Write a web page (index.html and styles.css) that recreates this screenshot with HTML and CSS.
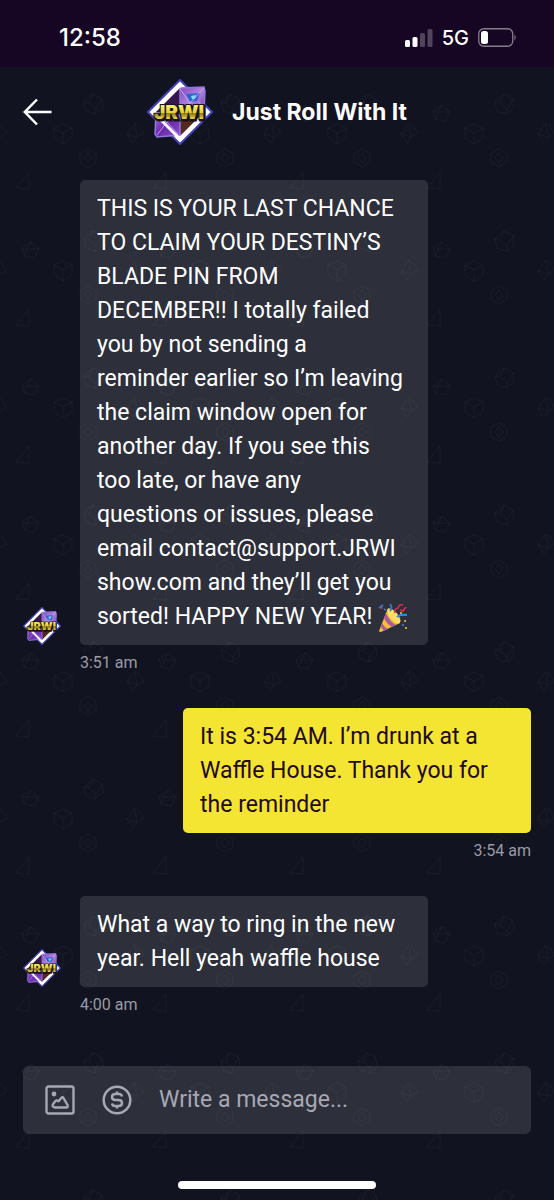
FILE: index.html
```
<!DOCTYPE html>
<html lang="en">
<head>
    <meta charset="UTF-8">
    <meta name="viewport" content="width=device-width, initial-scale=1.0">
    <title>Just Roll With It</title>
    <link rel="stylesheet" href="styles.css">
</head>
<body>
    <div class="status-bar">
        <span class="clock">12:58</span>
        <div class="status-icons">
            <svg width="28" height="18" viewBox="0 0 28 18" fill="#fff" aria-hidden="true">
                <rect x="0" y="11" width="5" height="7" rx="1.5"/>
                <rect x="7.5" y="8" width="5" height="10" rx="1.5"/>
                <rect x="15" y="4" width="5" height="14" rx="1.5" opacity="0.25"/>
                <rect x="22.5" y="0" width="5" height="18" rx="1.5" opacity="0.25"/>
            </svg>
            <span class="network">5G</span>
            <svg width="39" height="19" viewBox="0 0 39 19" aria-hidden="true">
                <rect x="0.75" y="0.75" width="34" height="17.5" rx="5" fill="none" stroke="#857d8c" stroke-width="1.3"/>
                <rect x="3" y="3" width="7" height="13" rx="2.5" fill="#fff"/>
                <path d="M36.5 6.5q2.500 3 0 6z" fill="#857d8c"/>
            </svg>
        </div>
    </div>

    <div class="chat">
        <header class="chat-header">
            <button class="back" type="button" aria-label="Back">
                <svg width="30" height="28" viewBox="0 0 30 28" fill="none" stroke="#fff" stroke-width="2.5" aria-hidden="true">
                    <path d="M14 1.500 1.800 14 14 26.500M2 14H28.500"/>
                </svg>
            </button>
            <div class="channel">
                <svg class="channel-logo" viewBox="0 0 66 66" aria-hidden="true">
                    <defs>
                        <linearGradient id="gold" x1="0" y1="0" x2="0" y2="1">
                            <stop offset="0.2" stop-color="#f8ee6a"/>
                            <stop offset="0.5" stop-color="#e4cf2e"/>
                            <stop offset="0.55" stop-color="#8f7a20"/>
                            <stop offset="0.8" stop-color="#f2df3c"/>
                        </linearGradient>
                        <linearGradient id="gem" x1="0" y1="0" x2="1" y2="1">
                            <stop offset="0" stop-color="#8344bd"/>
                            <stop offset="0.5" stop-color="#b484e0"/>
                            <stop offset="1" stop-color="#6a3aa8"/>
                        </linearGradient>
                        <linearGradient id="gem-dark" x1="0" y1="0" x2="1" y2="1">
                            <stop offset="0" stop-color="#a86be0"/>
                            <stop offset="0.5" stop-color="#6a2ba6"/>
                            <stop offset="1" stop-color="#8b4fd0"/>
                        </linearGradient>
                    </defs>
                    <g id="logo">
                        <path d="M33 1 65 33 33 65 1 33Z" fill="#fff" stroke="#4442b8" stroke-width="2"/>
                        <path d="M33 8 V33 H8Z" fill="#35184f"/>
                        <path d="M33 58 V33 H58Z" fill="#56291f"/>
                        <path d="M33 9 57 8 58 12 57 33 H33Z" fill="url(#gem)" stroke="#8d78e0" stroke-width="1.5"/>
                        <path d="M39 15 53 14 50 22 43 23Z" fill="#2968cf"/>
                        <path d="M44 17 49 16 48 20 45 20Z" fill="#7fdcff"/>
                        <path d="M33 10 43 24 57 9M43 24 38 33M51 22 57 30" fill="none" stroke="#c9a6f4"/>
                        <path d="M9 34 H33 V56 L10 58 8 55Z" fill="url(#gem-dark)" stroke="#8d78e0" stroke-width="1.5"/>
                        <path d="M10 56 20 43 31 55M10 38 20 43 32 38" fill="none" stroke="#d58bff"/>
                        <path d="M33 60 60 33" stroke="#fff" stroke-width="4"/>
                        <path d="M6 33 33 6" stroke="#fff" stroke-width="4"/>
                        <path d="M7 34 33 60" stroke="#fff" stroke-width="3"/>
                        <text x="33" y="41" text-anchor="middle" class="logo-shadow">JRWI</text>
                        <text x="32" y="40" text-anchor="middle" class="logo-text">JRWI</text>
                    </g>
                </svg>
                <h1>Just Roll With It</h1>
            </div>
        </header>

        <main class="messages">
            <div class="message received">
                <svg class="avatar" viewBox="0 0 66 66" aria-hidden="true"><use href="#logo"/></svg>
                <p class="bubble">
                    THIS IS YOUR LAST CHANCE<br>
                    TO CLAIM YOUR DESTINY’S<br>
                    BLADE PIN FROM<br>
                    DECEMBER!! I totally failed<br>
                    you by not sending a<br>
                    reminder earlier so I’m leaving<br>
                    the claim window open for<br>
                    another day. If you see this<br>
                    too late, or have any<br>
                    questions or issues, please<br>
                    email contact@support.JRWI<br>
                    show.com and they’ll get you<br>
                    sorted! HAPPY NEW YEAR!
                    <svg class="emoji" viewBox="0 0 30 30" role="img" aria-label="Party popper">
                        <path d="M10 5 1 28q0 1 2 1L22 20Q19 9 10 5Z" fill="#f6bd35"/>
                        <path d="M8 10q4 9 10 12l-4 2Q8 20 6 15zM4 20q3 5 6 6l-4 2-3-4z" fill="#a65c9e"/>
                        <ellipse cx="16" cy="13" rx="4" ry="9" transform="rotate(-40 16 13)" fill="#ffdf63"/>
                        <path d="M17 10q-1-4 3-5 1-4 5-3M22 7l3 1 3-4" fill="none" stroke="#cd344f" stroke-width="1.6"/>
                        <path d="M19 14q3-3 10-2" fill="none" stroke="#398de0" stroke-width="2.2"/>
                        <path d="M12 8q3-3 0-7M1 5l4-3M6 6l2 1" fill="none" stroke="#3977cf" stroke-width="1.8"/>
                        <g fill="#f5cf45">
                            <circle cx="27" cy="18" r="1"/>
                            <circle cx="28" cy="25" r="1"/>
                            <circle cx="23" cy="10" r="1"/>
                        </g>
                        <circle cx="25" cy="22" r="1" fill="#398de0"/>
                        <circle cx="4" cy="5" r="1" fill="#cd344f"/>
                    </svg>
                </p>
                <time class="time">3:51 am</time>
            </div>

            <div class="message sent">
                <p class="bubble">It is 3:54 AM. I’m drunk at a Waffle House. Thank you for the reminder</p>
                <time class="time">3:54 am</time>
            </div>

            <div class="message received">
                <svg class="avatar" viewBox="0 0 66 66" aria-hidden="true"><use href="#logo"/></svg>
                <p class="bubble">What a way to ring in the new year. Hell yeah waffle house</p>
                <time class="time">4:00 am</time>
            </div>
        </main>

        <form class="composer">
            <button type="button" aria-label="Add image">
                <svg width="30" height="30" viewBox="0 0 30 30" fill="none" stroke="currentColor" stroke-width="2.4" stroke-linejoin="round" aria-hidden="true">
                    <rect x="1.5" y="1.5" width="27" height="27" rx="2"/>
                    <circle cx="9" cy="9" r="2.4" fill="currentColor" stroke="none"/>
                    <path d="M10 22.500q-4-1-1.500-4l2-2.500q1-1 3 .2l3-3.500q1-1 2 .3l4 7q1 2.500-1.500 2.500z"/>
                </svg>
            </button>
            <button type="button" aria-label="Send a tip">
                <svg width="30" height="30" viewBox="0 0 30 30" fill="none" stroke="currentColor" stroke-width="2.5" aria-hidden="true">
                    <circle cx="15" cy="15" r="13.3"/>
                    <path d="M20 11.500q-.5-2.500-3-2.500h-3.500Q10 9 10 12t3.500 3h3q3.500 0 3.500 3t-3.500 3H13q-2.500 0-3-2.500M15 6.500V9M15 21v2.500"/>
                </svg>
            </button>
            <input type="text" name="message" placeholder="Write a message..." aria-label="Write a message">
        </form>
        <div class="home-indicator"></div>
    </div>
</body>
</html>
```

FILE: styles.css
```
* {
    box-sizing: border-box;
}
body {
    margin: 0;
    min-height: 100vh;
    display: flex;
    flex-direction: column;
    font-family: Roboto, "Liberation Sans", sans-serif;
    font-size: 23px;
    line-height: 34px;
    color: #fff;
    background-color: #111320;
}
button {
    padding: 0;
    border: none;
    background: none;
    color: inherit;
    cursor: pointer;
}
svg {
    display: block;
}
.logo-text, .logo-shadow {
    font-family: Inter, sans-serif;
    font-size: 19px;
    font-weight: 900;
}
.logo-text {
    fill: url(#gold);
    stroke: #17121c;
    stroke-width: 2px;
    paint-order: stroke;
}
.logo-shadow {
    fill: #17121c;
    stroke: #17121c;
    stroke-width: 3px;
}

/* Status bar */
.status-bar {
    display: flex;
    justify-content: space-between;
    align-items: center;
    height: 67px;
    padding: 8px 37px 0 59px;
    background-color: #160624;
    font-family: Inter, sans-serif;
}
.clock {
    font-size: 24px;
    font-weight: 500;
}
.status-icons {
    display: flex;
    align-items: center;
    gap: 9px;
}
.network {
    font-size: 20px;
    font-weight: 500;
}

/* Chat */
.chat {
    flex: 1;
    display: flex;
    flex-direction: column;
    padding: 0 23px;
    background-image: url("data:image/svg+xml,%3Csvg xmlns='http://www.w3.org/2000/svg' width='137' height='137' fill='none' stroke='%23ffffff' stroke-opacity='.03'%3E%3Cpath d='M93 27l9 5 1 9-8 6-9-3-2-9zM93 27l-4 9 7 6 6-10M84 35l5 1M96 42l-1 5M63 57l9 4v10l-9 6-9-6V61zM54 61l9 5 9-5M63 66v11M127 67l8-11 2 14-4 6zM127 67l10 3M0 57l7 9-7 4M88 82l8 5v8l-8 5-8-5v-8zM84 91l4-5 4 5-4 5zM16 121l13-16v17zM22 44l9-6 8 7-5 9-10-2zM31 38l-7 14M39 45H22'/%3E%3C/svg%3E");
}
.chat-header {
    display: flex;
    align-items: center;
    height: 90px;
}
.back {
    width: 30px;
}
.channel {
    flex: 1;
    display: flex;
    justify-content: center;
    align-items: center;
    gap: 19px;
    padding-right: 30px;
}
.channel-logo {
    width: 66px;
    height: 66px;
}
h1 {
    margin: 0;
    font-family: Inter, sans-serif;
    font-size: 23px;
    font-weight: 700;
}
.messages {
    flex: 1;
    display: flex;
    flex-direction: column;
    gap: 35px;
    padding: 23px 0 50px;
}
.message {
    display: grid;
    row-gap: 8px;
}
.received {
    grid-template-columns: 38px 68.5%;
    column-gap: 19px;
}
.sent {
    grid-template-columns: 68.5%;
    justify-content: end;
}
.avatar {
    width: 38px;
    height: 38px;
    align-self: end;
}
.bubble {
    margin: 0;
    padding: 12px 17px 11px;
    border-radius: 5px;
    background-color: rgba(255, 255, 255, 0.12);
}
.sent .bubble {
    background-color: #f4e533;
    color: #23091c;
}
.emoji {
    display: inline-block;
    width: 30px;
    height: 30px;
    vertical-align: middle;
}
.time {
    font-size: 16px;
    line-height: 20px;
    color: #9a9ba5;
}
.received .time {
    grid-column: 2;
}
.sent .time {
    text-align: right;
}

/* Composer */
.composer {
    display: flex;
    align-items: center;
    gap: 27px;
    height: 68px;
    padding: 0 22px;
    border-radius: 6px;
    background-color: rgba(255, 255, 255, 0.12);
    color: #a7a8b2;
}
.composer input {
    flex: 1;
    min-width: 0;
    padding: 0;
    border: none;
    outline: none;
    background: none;
    font: inherit;
    color: #fff;
}
.composer input::placeholder {
    color: #a7a8b2;
    opacity: 1;
}
.home-indicator {
    width: 198px;
    height: 8px;
    margin: 47px auto 11px;
    border-radius: 4px;
    background-color: #fff;
}
```
